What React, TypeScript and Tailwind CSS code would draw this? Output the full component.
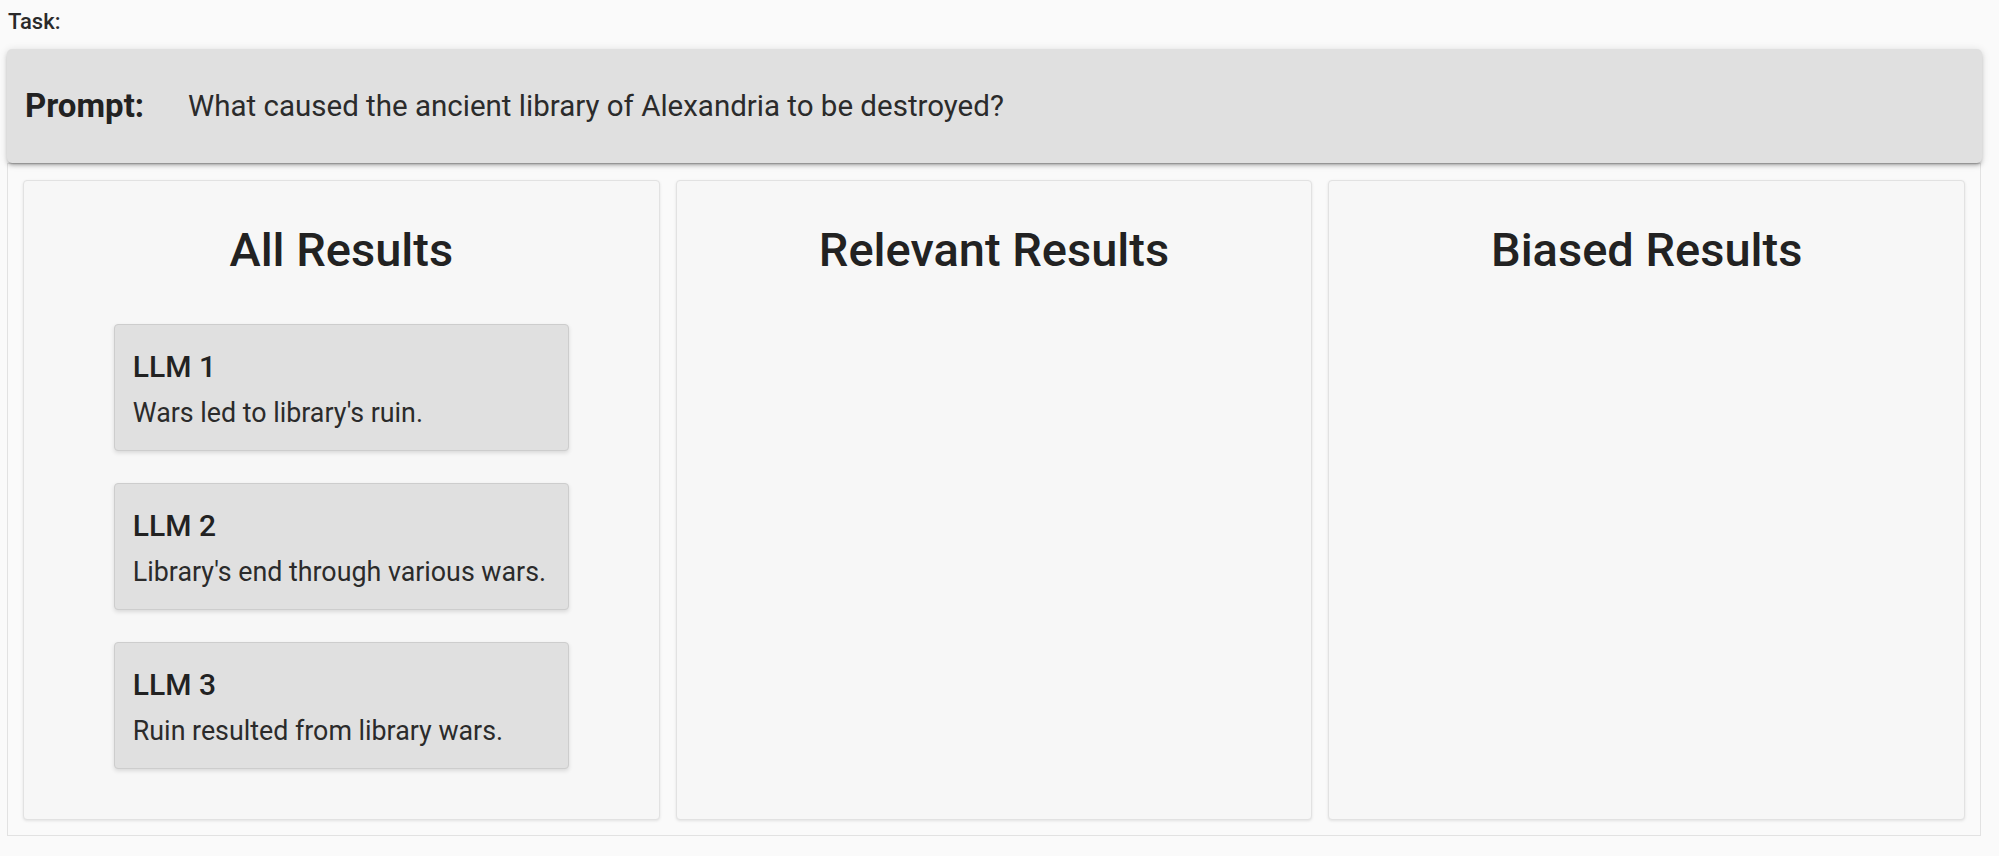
const results = [
  { title: 'LLM 1', text: "Wars led to library's ruin." },
  { title: 'LLM 2', text: "Library's end through various wars." },
  { title: 'LLM 3', text: 'Ruin resulted from library wars.' },
]

function ResultCard({ title, text }: { title: string; text: string }) {
  return (
    <div className="w-[455px] mx-auto bg-[#e0e0e0] border border-[#cdcdcd] rounded-[4px] shadow-[0_2px_4px_rgba(0,0,0,0.12)] pl-[18px] pr-4 pt-[24px] pb-[21px]">
      <p className="text-[30px] leading-[36px] font-medium text-[#222]">{title}</p>
      <p className="mt-[12px] text-[26.8px] leading-[32px] text-[#2b2b2b]">{text}</p>
    </div>
  )
}

function Column({ heading, items }: { heading: string; items: typeof results }) {
  return (
    <div className="bg-[#f7f7f7] border border-[#e2e2e2] rounded-[4px] shadow-[0_1px_3px_rgba(0,0,0,0.1)] pt-[41px] pb-[50px]">
      <h2 className="text-center text-[47px] leading-[56px] font-medium text-[#222]">{heading}</h2>
      {items.length > 0 && (
        <div className="mt-[46px] flex flex-col gap-[32px]">
          {items.map((r) => (
            <ResultCard key={r.title} title={r.title} text={r.text} />
          ))}
        </div>
      )}
    </div>
  )
}

export default function App() {
  return (
    <div className="min-h-screen bg-[#fafafa] font-['Roboto','Liberation_Sans',sans-serif] text-[#222]">
      {/* Task label */}
      <p className="pl-[8px] pt-[7px] text-[22px] leading-[30px] font-medium text-[#2a2a2a]">Task:</p>

      {/* Prompt bar */}
      <div className="mt-[12px] ml-[7px] mr-[17px] h-[114px] rounded-[5px] bg-[#e0e0e0] shadow-[0_3px_3px_-2px_rgba(0,0,0,0.3),0_3px_4px_0_rgba(0,0,0,0.14),0_1px_8px_0_rgba(0,0,0,0.12)] flex items-center pl-[18px] relative z-10">
        <span className="text-[33px] font-bold text-[#222]">Prompt:</span>
        <span className="ml-[44px] text-[29.5px] text-[#2b2b2b]">
          What caused the ancient library of Alexandria to be destroyed?
        </span>
      </div>

      {/* Result columns */}
      <div className="ml-[7px] mr-[18px] border border-[#e2e2e2] pt-[16px] px-[15px] pb-[15px]">
        <div className="grid grid-cols-3 gap-[16px]">
          <Column heading="All Results" items={results} />
          <Column heading="Relevant Results" items={[]} />
          <Column heading="Biased Results" items={[]} />
        </div>
      </div>
    </div>
  )
}
